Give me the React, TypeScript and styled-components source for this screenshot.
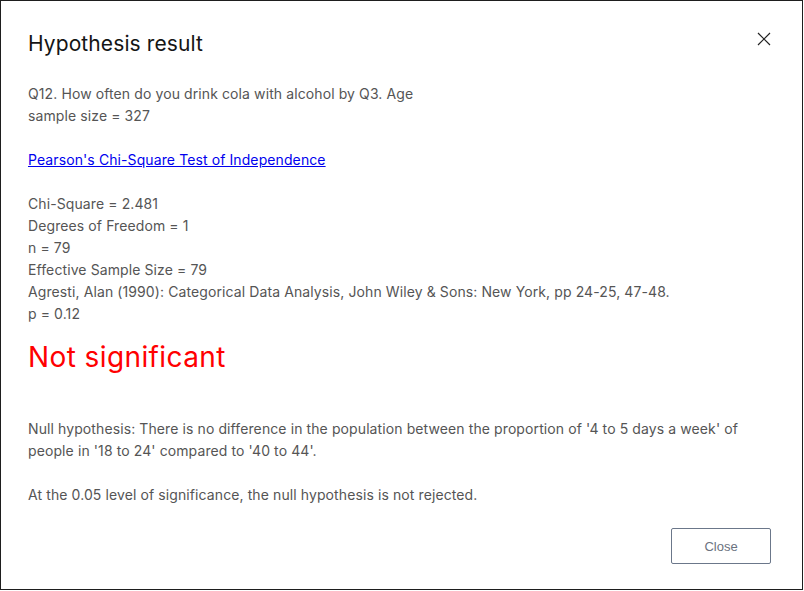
import React from "react";
import styled, { createGlobalStyle } from "styled-components";

const GlobalStyle = createGlobalStyle`
  html, body {
    margin: 0;
    padding: 0;
    background: #ffffff;
  }
  body {
    font-family: Inter, "Open Sans", sans-serif;
  }
`;

const Modal = styled.div`
  box-sizing: border-box;
  width: 803px;
  height: 590px;
  border: 1px solid #1e1e1e;
  background: #fff;
  display: flex;
  flex-direction: column;
  padding: 0 31px 25px 27px;
`;

const Header = styled.div`
  display: flex;
  align-items: center;
  justify-content: space-between;
  height: 82px;
`;

const Title = styled.h2`
  margin: 3px 0 0;
  font-size: 21px;
  font-weight: 400;
  letter-spacing: 0.1px;
  color: #151515;
`;

const CloseIcon = styled.button`
  border: none;
  background: none;
  padding: 0;
  width: 14px;
  height: 14px;
  display: flex;
  cursor: pointer;
  margin-top: -6px;
`;

const Body = styled.div`
  flex: 1;
  font-size: 14px;
  line-height: 22px;
  letter-spacing: 0.1px;
  color: #555555;
`;

const Line = styled.div<{ $gapBefore?: number }>`
  margin-top: ${(p) => p.$gapBefore ?? 0}px;
`;

const Link = styled.a`
  color: #0000ee;
  text-decoration: underline;
`;

const Verdict = styled.div`
  font-size: 28px;
  line-height: 44px;
  letter-spacing: 0.4px;
  color: #ff0000;
  margin-top: 10px;
`;

const Footer = styled.div`
  display: flex;
  justify-content: flex-end;
`;

const Button = styled.button`
  width: 100px;
  height: 36px;
  border: 1px solid #6b778a;
  border-radius: 2px;
  background: #fff;
  color: #6b7280;
  font-family: "Liberation Sans", Arial, sans-serif;
  font-size: 13px;
`;

export default function App() {
  return (
    <>
      <GlobalStyle />
      <Modal>
        <Header>
          <Title>Hypothesis result</Title>
          <CloseIcon aria-label="close">
            <svg width="14" height="14" viewBox="0 0 14 14">
              <path d="M1 1 L13 13 M13 1 L1 13" stroke="#222" strokeWidth="1.2" />
            </svg>
          </CloseIcon>
        </Header>
        <Body>
          <Line>Q12. How often do you drink cola with alcohol by Q3. Age</Line>
          <Line>sample size = 327</Line>
          <Line $gapBefore={22}>
            <Link href="#">Pearson's Chi-Square Test of Independence</Link>
          </Line>
          <Line $gapBefore={22}>Chi-Square = 2.481</Line>
          <Line>Degrees of Freedom = 1</Line>
          <Line>n = 79</Line>
          <Line>Effective Sample Size = 79</Line>
          <Line>
            Agresti, Alan (1990): Categorical Data Analysis, John Wiley &amp; Sons: New York, pp 24-25, 47-48.
          </Line>
          <Line>p = 0.12</Line>
          <Verdict>Not significant</Verdict>
          <Line $gapBefore={39}>
            Null hypothesis: There is no difference in the population between the proportion of '4 to 5 days a week' of
            people in '18 to 24' compared to '40 to 44'.
          </Line>
          <Line $gapBefore={22}>At the 0.05 level of significance, the null hypothesis is not rejected.</Line>
        </Body>
        <Footer>
          <Button>Close</Button>
        </Footer>
      </Modal>
    </>
  );
}
